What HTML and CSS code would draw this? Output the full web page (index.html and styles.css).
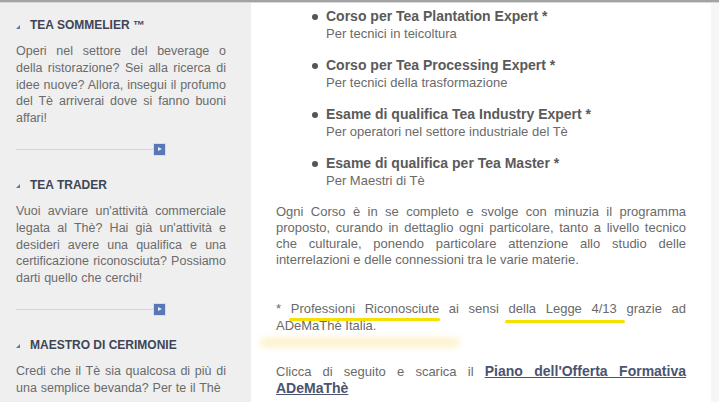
FILE: index.html
```html
<!DOCTYPE html>
<html lang="it">

<head>
    <meta charset="UTF-8">
    <meta name="viewport" content="width=device-width, initial-scale=1.0">
    <title>Corsi ADeMaThè</title>
    <link rel="stylesheet" href="styles.css">
</head>

<body>
    <div class="page">
        <div class="sidebar">
            <div class="box">
                <h3><span class="arrow"></span>TEA SOMMELIER ™</h3>
                <p>Operi nel settore del beverage o della ristorazione? Sei alla ricerca di idee nuove? Allora, insegui il profumo del Tè arriverai dove si fanno buoni affari!</p>
                <div class="more"><span class="line"></span><a href="javascript:;" class="btn"></a></div>
            </div>
            <div class="box">
                <h3><span class="arrow"></span>TEA TRADER</h3>
                <p>Vuoi avviare un'attività commerciale legata al Thè? Hai già un'attività e desideri avere una qualifica e una certificazione riconosciuta? Possiamo darti quello che cerchi!</p>
                <div class="more"><span class="line"></span><a href="javascript:;" class="btn"></a></div>
            </div>
            <div class="box">
                <h3><span class="arrow"></span>MAESTRO DI CERIMONIE</h3>
                <p>Credi che il Tè sia qualcosa di più di una semplice bevanda? Per te il Thè</p>
            </div>
        </div>

        <div class="main">
            <ul class="courses">
                <li><b>Corso per Tea Plantation Expert *</b><span>Per tecnici in teicoltura</span></li>
                <li><b>Corso per Tea Processing Expert *</b><span>Per tecnici della trasformazione</span></li>
                <li><b>Esame di qualifica Tea Industry Expert *</b><span>Per operatori nel settore industriale del Tè</span></li>
                <li><b>Esame di qualifica per Tea Master *</b><span>Per Maestri di Tè</span></li>
            </ul>
            <p>Ogni Corso è in se completo e svolge con minuzia il programma proposto, curando in dettaglio ogni particolare, tanto a livello tecnico che culturale, ponendo particolare attenzione allo studio delle interrelazioni e delle connessioni tra le varie materie.</p>
            <p class="note">* <span class="mark mark-a">Professioni Riconosciute</span> ai sensi <span class="mark mark-b">della Legge 4/13</span> grazie ad <span class="glow">ADeMaThè Italia.</span></p>
            <p class="cta">Clicca di seguito e scarica il <a href="javascript:;" class="doc">Piano dell'Offerta Formativa ADeMaThè</a></p>
        </div>

        <div class="edge"></div>
    </div>
</body>

</html>
```

FILE: styles.css
```css
* {
    margin: 0;
    padding: 0;
}

body {
    font-family: "Liberation Sans", Arial, sans-serif;
    font-size: 13px;
    color: #6a6a6a;
    border-top: 2px solid #a3a3a3;
    height: 400px;
    overflow: hidden;
}

.page {
    display: flex;
    height: 100%;
    border-top: 1px solid #d8d8d8;
}

/* colonna sinistra */
.sidebar {
    width: 251px;
    background-color: #efefef;
    padding: 14px 25px 0 16px;
    box-sizing: border-box;
}

.sidebar h3 {
    font-size: 12px;
    font-weight: bold;
    color: #3e4556;
    line-height: 16px;
    display: flex;
    align-items: center;
    gap: 10px;
}

.sidebar .arrow {
    width: 0;
    height: 0;
    border-left: 4px solid transparent;
    border-bottom: 4px solid #5a78b4;
    margin-top: 3px;
}

.sidebar p {
    margin-top: 10px;
    font-size: 12.5px;
    word-spacing: .35px;
    line-height: 16.8px;
    text-align: justify;
    color: #6b6b6b;
}

.sidebar .more {
    display: flex;
    align-items: center;
    margin: 16px 0 21px;
}

.sidebar .line {
    width: 137px;
    height: 1px;
    background-color: #d4d4d4;
}

.sidebar .btn {
    width: 11px;
    height: 11px;
    border: 1px solid #d9dde6;
    background-color: #5877b6;
    position: relative;
}

.sidebar .btn::after {
    content: "";
    position: absolute;
    left: 4px;
    top: 3px;
    border-left: 4px solid #e8ecf5;
    border-top: 2.5px solid transparent;
    border-bottom: 2.5px solid transparent;
}

/* colonna centrale */
.main {
    flex: 1;
    background-color: #fff;
    padding: 5px 25px 0 25px;
}

.courses {
    list-style: none;
    padding-left: 50px;
}

.courses li {
    position: relative;
    margin-bottom: 15px;
}

.courses li::before {
    content: "";
    position: absolute;
    left: -14px;
    top: 6px;
    width: 6px;
    height: 6px;
    border-radius: 50%;
    background-color: #555;
}

.courses b {
    display: block;
    font-size: 14px;
    line-height: 17px;
    color: #5a5a5a;
}

.courses span {
    display: block;
    line-height: 17px;
    color: #6a6a6a;
}

.main p {
    line-height: 16px;
    text-align: justify;
    margin-top: 14px;
}

.main p.note {
    margin-top: 32px;
    line-height: 17px;
}

.main p.cta {
    margin-top: 29px;
    line-height: 17px;
}

.mark {
    position: relative;
}

.mark::after {
    content: "";
    position: absolute;
    left: -2px;
    right: -1px;
    bottom: -5px;
    height: 3px;
    border-radius: 2px;
    background-color: #f5e000;
}

.mark-b::after {
    left: -4px;
    right: -8px;
    bottom: -7px;
}

.glow {
    position: relative;
}

.glow::after {
    content: "";
    position: absolute;
    left: -16px;
    width: 200px;
    top: 20px;
    height: 9px;
    border-radius: 6px;
    background-color: #fbe9a6;
    filter: blur(3px);
    opacity: .6;
}

.doc {
    font-size: 14px;
    line-height: 17px;
    font-weight: bold;
    color: #4a5470;
}

.edge {
    width: 8px;
    background-color: #f6f6f6;
}
```
